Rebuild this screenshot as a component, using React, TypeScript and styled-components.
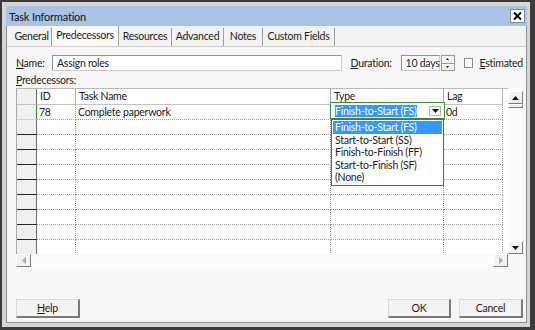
import React from "react";
import styled, { createGlobalStyle } from "styled-components";

const GlobalStyle = createGlobalStyle`
  html, body {
    margin: 0;
    padding: 0;
    background: #ffffff;
  }
  body {
    font-family: Lato, "Noto Sans", sans-serif;
    font-size: 10.5px;
    letter-spacing: -0.25px;
    color: #1b1b1b;
  }
`;

const Screen = styled.div`
  width: 535px;
  height: 330px;
  box-sizing: border-box;
  border-style: solid;
  border-color: #3b3b3b;
  border-width: 2px 5px 3px 2px;
  background: #d6d6d6;
  padding: 4px 3px 4px 4px;
  display: flex;
  flex-direction: column;
`;

const TitleBar = styled.div`
  height: 20px;
  flex: none;
  background: #a9c3e4;
  display: flex;
  align-items: center;
  padding: 0 2px 0 3px;
  font-size: 11px;
  letter-spacing: -0.2px;
  color: #111;
`;

const Title = styled.span`
  flex: 1;
`;

const CloseButton = styled.div`
  width: 15px;
  height: 14px;
  box-sizing: border-box;
  background: #ffffff;
  border: 1px solid #8a8a8a;
  display: flex;
  align-items: center;
  justify-content: center;
`;

const Body = styled.div`
  flex: 1;
  display: flex;
  flex-direction: column;
  background: #f7f7f7;
  border: 1px solid #8c8c8c;
  border-top: none;
`;

const TabStrip = styled.div`
  height: 20px;
  flex: none;
  display: flex;
  align-items: flex-end;
  padding-left: 5px;
  background: #f2f2f2;
  border-bottom: 1px solid #d0d0d0;
`;

const Tab = styled.div<{ $w: number; $active?: boolean }>`
  width: ${(p) => p.$w}px;
  height: ${(p) => (p.$active ? 20 : 18)}px;
  box-sizing: border-box;
  line-height: ${(p) => (p.$active ? 18 : 16)}px;
  text-align: center;
  border-right: 1px solid #9e9e9e;
  background: ${(p) => (p.$active ? "#fafafa" : "transparent")};
  white-space: nowrap;
`;

const Panel = styled.div`
  flex: 1;
  display: flex;
  flex-direction: column;
  padding: 8px 3px 4px 9px;
`;

const FieldRow = styled.div`
  display: flex;
  align-items: center;
  height: 16px;
`;

const Label = styled.span<{ $w?: number }>`
  width: ${(p) => (p.$w ? `${p.$w}px` : "auto")};
  flex: none;
  white-space: nowrap;
`;

const Key = styled.u`
  text-decoration: underline;
  text-underline-offset: 1px;
`;

const TextBox = styled.div<{ $w: number }>`
  width: ${(p) => p.$w}px;
  height: 16px;
  box-sizing: border-box;
  border: 1px solid #8f8f8f;
  border-right-color: #c9c9c9;
  border-bottom-color: #c9c9c9;
  background: #ffffff;
  padding-left: 4px;
  line-height: 14px;
  white-space: nowrap;
`;

const Spin = styled.div`
  width: 14px;
  height: 16px;
  margin-left: 1px;
  box-sizing: border-box;
  border: 1px solid #9a9a9a;
  background: #f4f4f4;
  display: flex;
  flex-direction: column;
`;

const SpinHalf = styled.div<{ $top?: boolean }>`
  flex: 1;
  display: flex;
  align-items: center;
  justify-content: center;
  border-bottom: ${(p) => (p.$top ? "1px solid #9a9a9a" : "none")};
`;

const CheckBox = styled.div`
  width: 10px;
  height: 10px;
  box-sizing: border-box;
  border: 1px solid #8a8a8a;
  background: #ffffff;
  margin: 0 6px 0 9px;
`;

const GroupLabel = styled.div`
  margin-top: 3px;
  height: 14px;
  line-height: 13px;
`;

const GridBox = styled.div`
  position: relative;
  width: 507px;
`;

const GridMain = styled.div`
  display: flex;
  height: 166px;
`;

const Table = styled.div`
  flex: 1;
  display: grid;
  grid-template-columns: 20px 39px 255px 113px 59px 1fr;
  grid-template-rows: 16px repeat(10, 15px);
  background: #ffffff;
  border-top: 1px solid #b9b9b9;
  border-left: 1px solid #a9a9a9;
  box-sizing: border-box;
  overflow: hidden;
`;

const HeadCell = styled.div<{ $corner?: boolean }>`
  box-sizing: border-box;
  background: ${(p) => (p.$corner ? "#f0f0f0" : "#ffffff")};
  border-right: 1px solid ${(p) => (p.$corner ? "#6b6b6b" : "#b3b3b3")};
  border-bottom: 1px solid #c2c2c2;
  padding-left: 3px;
  line-height: 15px;
  white-space: nowrap;
`;

const RowHead = styled.div<{ $current?: boolean; $last?: boolean }>`
  box-sizing: border-box;
  background: #f0f0f0;
  border-right: 1px solid ${(p) => (p.$current ? "#2f8a34" : "#6b6b6b")};
  border-bottom: ${(p) =>
    p.$last ? "none" : p.$current ? "1px solid #d0d0d0" : "1px solid #262626"};
`;

const Cell = styled.div<{ $last?: boolean }>`
  box-sizing: border-box;
  border-right: 1px dotted #9c9c9c;
  border-bottom: ${(p) => (p.$last ? "none" : "1px dotted #9c9c9c")};
  padding-left: 2px;
  line-height: 14px;
  white-space: nowrap;
`;

const Filler = styled.div`
  background: #ffffff;
`;

const VScroll = styled.div`
  width: 15px;
  flex: none;
  display: flex;
  flex-direction: column;
  background: #fbfbfb;
  padding-top: 3px;
`;

const ScrollBtn = styled.div`
  width: 15px;
  height: 13px;
  box-sizing: border-box;
  background: #f1f1f1;
  border: 1px solid #ffffff;
  border-right-color: #7c7c7c;
  border-bottom-color: #7c7c7c;
  display: flex;
  align-items: center;
  justify-content: center;
  flex: none;
`;

const Thumb = styled.div`
  height: 4px;
  box-sizing: border-box;
  border: 1px solid #ffffff;
  border-right-color: #7c7c7c;
  border-bottom-color: #7c7c7c;
  background: #f1f1f1;
  flex: none;
`;

const Track = styled.div`
  flex: 1;
`;

const HScroll = styled.div`
  display: flex;
  width: 492px;
  height: 14px;
  justify-content: space-between;
  background: #fbfbfb;
`;

const EditBox = styled.div`
  position: absolute;
  left: 314px;
  top: 14px;
  width: 115px;
  height: 17px;
  box-sizing: border-box;
  border: 1px solid #3d8b3d;
  background: #ffffff;
  display: flex;
  align-items: center;
  padding-left: 4px;
`;

const Selected = styled.span`
  background: #3399ff;
  color: #ffffff;
  line-height: 12px;
  white-space: nowrap;
`;

const DropBtn = styled.div`
  margin-left: auto;
  margin-right: 3px;
  width: 12px;
  height: 10px;
  box-sizing: border-box;
  border: 1px solid #b5b5b5;
  background: #fdfdfd;
  display: flex;
  align-items: center;
  justify-content: center;
`;

const DropList = styled.div`
  position: absolute;
  left: 315px;
  top: 31px;
  width: 113px;
  box-sizing: border-box;
  border: 1px solid #646464;
  background: #ffffff;
  padding: 1px;
`;

const DropItem = styled.div<{ $active?: boolean }>`
  height: 12.5px;
  line-height: 12.5px;
  padding-left: 2px;
  white-space: nowrap;
  background: ${(p) => (p.$active ? "#3399ff" : "transparent")};
  color: ${(p) => (p.$active ? "#ffffff" : "#1b1b1b")};
`;

const ButtonRow = styled.div`
  margin-top: auto;
  display: flex;
  justify-content: space-between;
  align-items: flex-end;
`;

const ButtonGroup = styled.div`
  display: flex;
  gap: 8px;
`;

const Button = styled.div<{ $w: number }>`
  width: ${(p) => p.$w}px;
  height: 19px;
  box-sizing: border-box;
  background: #f3f3f3;
  border: 1px solid #d9d9d9;
  border-right: 2px solid #7a7a7a;
  border-bottom: 2px solid #7a7a7a;
  text-align: center;
  line-height: 16px;
`;

const Arrow = ({ dir, color = "#111" }: { dir: "up" | "down" | "left" | "right"; color?: string }) => {
  const pts = {
    up: "0,4 3.5,0 7,4",
    down: "0,0 7,0 3.5,4",
    left: "4,0 4,7 0,3.5",
    right: "0,0 0,7 4,3.5",
  }[dir];
  const horiz = dir === "left" || dir === "right";
  return (
    <svg width={horiz ? 4 : 7} height={horiz ? 7 : 4} viewBox={horiz ? "0 0 4 7" : "0 0 7 4"}>
      <polygon points={pts} fill={color} />
    </svg>
  );
};

const tabs = [
  { label: "General", w: 40 },
  { label: "Predecessors", w: 67, active: true },
  { label: "Resources", w: 53 },
  { label: "Advanced", w: 52 },
  { label: "Notes", w: 39 },
  { label: "Custom Fields", w: 72 },
];

const rows = [
  { id: "78", name: "Complete paperwork", type: "", lag: "0d" },
  ...Array.from({ length: 9 }, () => ({ id: "", name: "", type: "", lag: "" })),
];

const types = [
  "Finish-to-Start (FS)",
  "Start-to-Start (SS)",
  "Finish-to-Finish (FF)",
  "Start-to-Finish (SF)",
  "(None)",
];

export default function App() {
  return (
    <>
      <GlobalStyle />
      <Screen>
        <TitleBar>
          <Title>Task Information</Title>
          <CloseButton>
            <svg width="9" height="8" viewBox="0 0 9 8">
              <path d="M1 0.5 L8 7.5 M8 0.5 L1 7.5" stroke="#000" strokeWidth="2" />
            </svg>
          </CloseButton>
        </TitleBar>
        <Body>
          <TabStrip>
            {tabs.map((t) => (
              <Tab key={t.label} $w={t.w} $active={t.active}>
                {t.label}
              </Tab>
            ))}
          </TabStrip>
          <Panel>
            <FieldRow>
              <Label $w={36}>
                <Key>N</Key>ame:
              </Label>
              <TextBox $w={291}>Assign roles</TextBox>
              <Label $w={50} style={{ marginLeft: 9 }}>
                <Key>D</Key>uration:
              </Label>
              <TextBox $w={39}>10 days</TextBox>
              <Spin>
                <SpinHalf $top>
                  <svg width="3" height="2" viewBox="0 0 3 2">
                    <polygon points="0,2 1.5,0 3,2" fill="#111" />
                  </svg>
                </SpinHalf>
                <SpinHalf>
                  <svg width="3" height="2" viewBox="0 0 3 2">
                    <polygon points="0,0 3,0 1.5,2" fill="#111" />
                  </svg>
                </SpinHalf>
              </Spin>
              <CheckBox />
              <Label>
                <Key>E</Key>stimated
              </Label>
            </FieldRow>
            <GroupLabel>
              <Key>P</Key>redecessors:
            </GroupLabel>
            <GridBox>
              <GridMain>
                <Table>
                  <HeadCell $corner />
                  <HeadCell>ID</HeadCell>
                  <HeadCell>Task Name</HeadCell>
                  <HeadCell>Type</HeadCell>
                  <HeadCell>Lag</HeadCell>
                  <Filler />
                  {rows.map((r, i) => {
                    const last = i === rows.length - 1;
                    return (
                      <React.Fragment key={i}>
                        <RowHead $current={i === 0} $last={last} />
                        <Cell $last={last}>{r.id}</Cell>
                        <Cell $last={last}>{r.name}</Cell>
                        <Cell $last={last}>{r.type}</Cell>
                        <Cell $last={last}>{r.lag}</Cell>
                        <Filler />
                      </React.Fragment>
                    );
                  })}
                </Table>
                <VScroll>
                  <ScrollBtn>
                    <Arrow dir="up" />
                  </ScrollBtn>
                  <Thumb />
                  <Track />
                  <ScrollBtn>
                    <Arrow dir="down" />
                  </ScrollBtn>
                </VScroll>
              </GridMain>
              <HScroll>
                <ScrollBtn>
                  <Arrow dir="left" color="#a8a8a8" />
                </ScrollBtn>
                <ScrollBtn>
                  <Arrow dir="right" color="#a8a8a8" />
                </ScrollBtn>
              </HScroll>
              <EditBox>
                <Selected>Finish-to-Start (FS)</Selected>
                <DropBtn>
                  <Arrow dir="down" />
                </DropBtn>
              </EditBox>
              <DropList>
                {types.map((t, i) => (
                  <DropItem key={t} $active={i === 0}>
                    {t}
                  </DropItem>
                ))}
              </DropList>
            </GridBox>
            <ButtonRow>
              <Button $w={64}>
                <Key>H</Key>elp
              </Button>
              <ButtonGroup>
                <Button $w={63}>OK</Button>
                <Button $w={64}>Cancel</Button>
              </ButtonGroup>
            </ButtonRow>
          </Panel>
        </Body>
      </Screen>
    </>
  );
}
